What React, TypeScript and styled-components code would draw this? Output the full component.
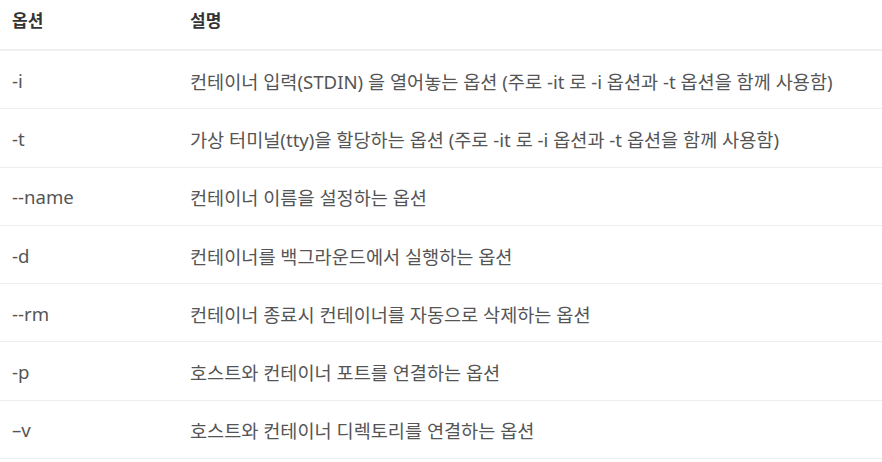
import styled, { createGlobalStyle } from 'styled-components';

const GlobalStyle = createGlobalStyle`
  body {
    margin: 0;
    background: #ffffff;
    font-family: "Noto Sans", "Noto Sans CJK KR", sans-serif;
  }
`;

const Table = styled.table`
  width: 882px;
  border-collapse: separate;
  border-spacing: 0;
  table-layout: fixed;
`;

const HeadCell = styled.th<{ width?: number }>`
  width: ${({ width }) => (width ? `${width}px` : 'auto')};
  box-sizing: border-box;
  height: 51px;
  padding: 0 0 10px 12px;
  text-align: left;
  font-size: 17px;
  font-weight: 700;
  color: #333333;
  border-bottom: 2px solid #efefef;
`;

const Cell = styled.td`
  box-sizing: border-box;
  height: 58.3px;
  padding: 1px 0 0 12px;
  font-size: 18.6px;
  color: #555555;
  border-bottom: 1px solid #eeeeee;
  white-space: nowrap;
`;

const rows: [string, string][] = [
  ['-i', '컨테이너 입력(STDIN) 을 열어놓는 옵션 (주로 -it 로 -i 옵션과 -t 옵션을 함께 사용함)'],
  ['-t', '가상 터미널(tty)을 할당하는 옵션 (주로 -it 로 -i 옵션과 -t 옵션을 함께 사용함)'],
  ['--name', '컨테이너 이름을 설정하는 옵션'],
  ['-d', '컨테이너를 백그라운드에서 실행하는 옵션'],
  ['--rm', '컨테이너 종료시 컨테이너를 자동으로 삭제하는 옵션'],
  ['-p', '호스트와 컨테이너 포트를 연결하는 옵션'],
  ['–v', '호스트와 컨테이너 디렉토리를 연결하는 옵션'],
];

export default function App() {
  return (
    <>
      <GlobalStyle />
      <Table>
        <thead>
          <tr>
            <HeadCell width={178}>옵션</HeadCell>
            <HeadCell>설명</HeadCell>
          </tr>
        </thead>
        <tbody>
          {rows.map(([opt, desc]) => (
            <tr key={opt}>
              <Cell>{opt}</Cell>
              <Cell>{desc}</Cell>
            </tr>
          ))}
        </tbody>
      </Table>
    </>
  );
}
